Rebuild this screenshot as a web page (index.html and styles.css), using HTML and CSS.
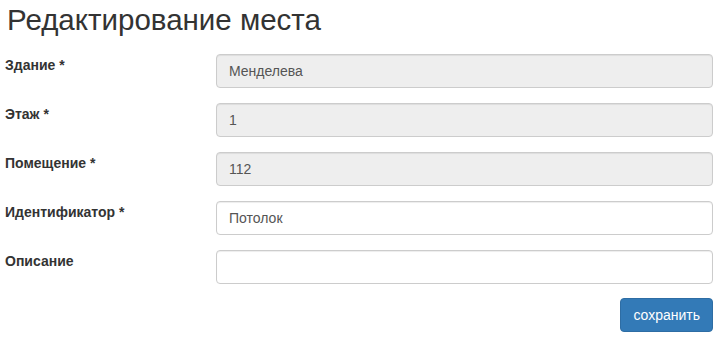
FILE: index.html
```html
<html lang="ru">
<head>
    <meta charset="UTF-8">
    <meta name="viewport" content="width=device-width, initial-scale=1.0">
    <title>Редактирование места</title>
    <link rel="stylesheet" href="styles.css">
</head>
<body>
    <div class="container">
        <h2 class="title">Редактирование места</h2>
        <form class="form" autocomplete="off">
            <div class="form-row">
                <label for="building">Здание *</label>
                <input type="text" id="building" class="form-control" value="Менделева" disabled>
            </div>
            <div class="form-row">
                <label for="floor">Этаж *</label>
                <input type="text" id="floor" class="form-control" value="1" disabled>
            </div>
            <div class="form-row">
                <label for="room">Помещение *</label>
                <input type="text" id="room" class="form-control" value="112" disabled>
            </div>
            <div class="form-row">
                <label for="ident">Идентификатор *</label>
                <input type="text" id="ident" class="form-control" value="Потолок">
            </div>
            <div class="form-row">
                <label for="descr">Описание</label>
                <input type="text" id="descr" class="form-control" value="">
            </div>
            <div class="form-actions">
                <button type="button" class="btn btn-primary">сохранить</button>
            </div>
        </form>
    </div>
</body>
</html>
```

FILE: styles.css
```css
html,body {
    height: 100%;
}
body {
    margin: 0;
    background: #fff;
    font-family: "Liberation Sans", Arial, Helvetica, sans-serif;
    font-size: 14px;
    line-height: 20px;
    color: #333;
}
.container {
    padding: 0 6px 0 5px;
}
.title {
    margin: 3px 0 18px 2px;
    font-size: 29.5px;
    font-weight: normal;
    line-height: 33px;
    color: #333;
}
.form {
    margin: 0;
    display: flex;
    flex-direction: column;
}
.form-row {
    display: grid;
    grid-template-columns: 211px 1fr;
    margin-bottom: 15px;
}
.form-row label {
    display: block;
    padding-top: 1px;
    font-weight: bold;
    color: #333;
}
.form-control {
    box-sizing: border-box;
    display: block;
    width: 100%;
    height: 34px;
    padding: 6px 12px;
    font-family: inherit;
    font-size: 14px;
    line-height: 20px;
    color: #555;
    background: #fff;
    border: 1px solid #ccc;
    border-radius: 4px;
    box-shadow: inset 0 1px 1px rgba(0,0,0,.075);
    outline: none;
}
.form-control:disabled {
    background: #eee;
    color: #555;
    opacity: 1;
    -webkit-text-fill-color: #555;
}
.form-actions {
    display: flex;
    justify-content: flex-end;
    margin-top: -1px;
}
.btn {
    height: 34px;
    padding: 6px 12px;
    font-family: inherit;
    font-size: 14px;
    line-height: 20px;
    border-radius: 4px;
    cursor: pointer;
}
.btn-primary {
    color: #fff;
    background-color: #337ab7;
    border: 1px solid #2e6da4;
}
```
